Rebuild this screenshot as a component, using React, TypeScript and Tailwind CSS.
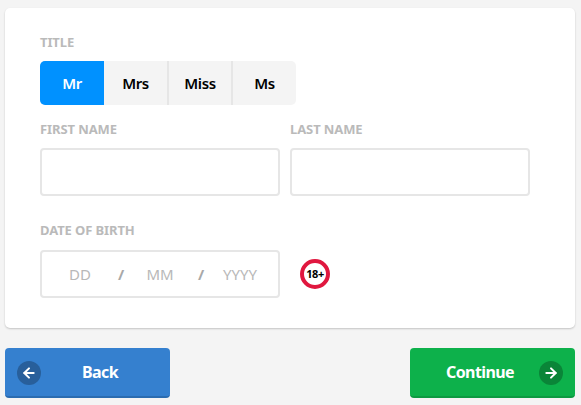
import { ArrowLeft, ArrowRight } from "lucide-react";

const titles = [
  { name: "Mrs", width: "w-[63px]" },
  { name: "Miss", width: "w-[64px]" },
  { name: "Ms", width: "w-[65px]" },
];

const Label = ({ children }: { children: string }) => (
  <div className="text-[13px] leading-[16px] font-bold tracking-[-0.1px] text-[#bababa] uppercase">{children}</div>
);

export default function App() {
  return (
    <div className="w-[581px] h-[405px] overflow-hidden bg-[#f4f4f4] px-[5px] pt-[8px] font-['Noto_Sans',sans-serif]">
      <div className="w-[570px] h-[320px] bg-white rounded-[5px] shadow-[0_1px_2px_rgba(0,0,0,0.2)] pl-[35px] pt-[26px]">
        <Label>Title</Label>
        <div className="flex mt-[11px] w-[256px] h-[44px] rounded-[5px] overflow-hidden bg-[#f4f4f4]">
          <div className="w-[64px] flex items-center justify-center bg-[#0091ff] text-white text-[15px] tracking-[-0.4px] font-semibold">Mr</div>
          {titles.map((t, i) => (
            <div
              key={t.name}
              className={`${t.width} flex items-center justify-center text-black text-[15px] tracking-[-0.4px] font-semibold ${i > 0 ? "border-l-2 border-[#e6e6e6]" : ""}`}
            >
              {t.name}
            </div>
          ))}
        </div>
        <div className="flex gap-[10px] mt-[16px]">
          <div className="w-[240px]">
            <Label>First Name</Label>
            <div className="mt-[11px] h-[48px] border-2 border-[#e6e6e6] rounded-[4px]" />
          </div>
          <div className="w-[240px]">
            <Label>Last Name</Label>
            <div className="mt-[11px] h-[48px] border-2 border-[#e6e6e6] rounded-[4px]" />
          </div>
        </div>
        <div className="mt-[26px]">
          <Label>Date of Birth</Label>
        </div>
        <div className="flex items-center mt-[12px]">
          <div className="w-[240px] h-[48px] border-2 border-[#e6e6e6] rounded-[4px] flex items-center text-[15px] text-[#b8b8b8]">
            <span className="w-[76px] text-center">DD</span>
            <span className="w-[4px] font-bold text-[#a8a8a8] text-center">/</span>
            <span className="w-[76px] text-center">MM</span>
            <span className="w-[4px] font-bold text-[#a8a8a8] text-center">/</span>
            <span className="w-[76px] text-center">YYYY</span>
          </div>
          <div className="ml-[20px] w-[30px] h-[30px] rounded-full border-[4px] border-[#e0173f] flex items-center justify-center text-[11px] font-bold text-black tracking-[-0.4px]">
            18+
          </div>
        </div>
      </div>
      <div className="flex justify-between w-[570px] mt-[20px]">
        <div className="relative w-[165px] h-[50px] rounded-[4px] bg-[#3580cf] border-b-2 border-[#2b6cb0] flex items-center justify-center pl-[25px] text-white text-[16px] tracking-[-0.6px] font-bold">
          <span className="absolute left-[12px] top-[13px] w-[24px] h-[24px] rounded-full bg-[#285f9b] flex items-center justify-center">
            <ArrowLeft size={16} strokeWidth={3} />
          </span>
          Back
        </div>
        <div className="relative w-[165px] h-[50px] rounded-[4px] bg-[#0db14b] border-b-2 border-[#0c9a41] flex items-center justify-center pr-[25px] text-white text-[16px] tracking-[-0.6px] font-bold">
          Continue
          <span className="absolute right-[12px] top-[13px] w-[24px] h-[24px] rounded-full bg-[#0a8538] flex items-center justify-center">
            <ArrowRight size={16} strokeWidth={3} />
          </span>
        </div>
      </div>
    </div>
  );
}
